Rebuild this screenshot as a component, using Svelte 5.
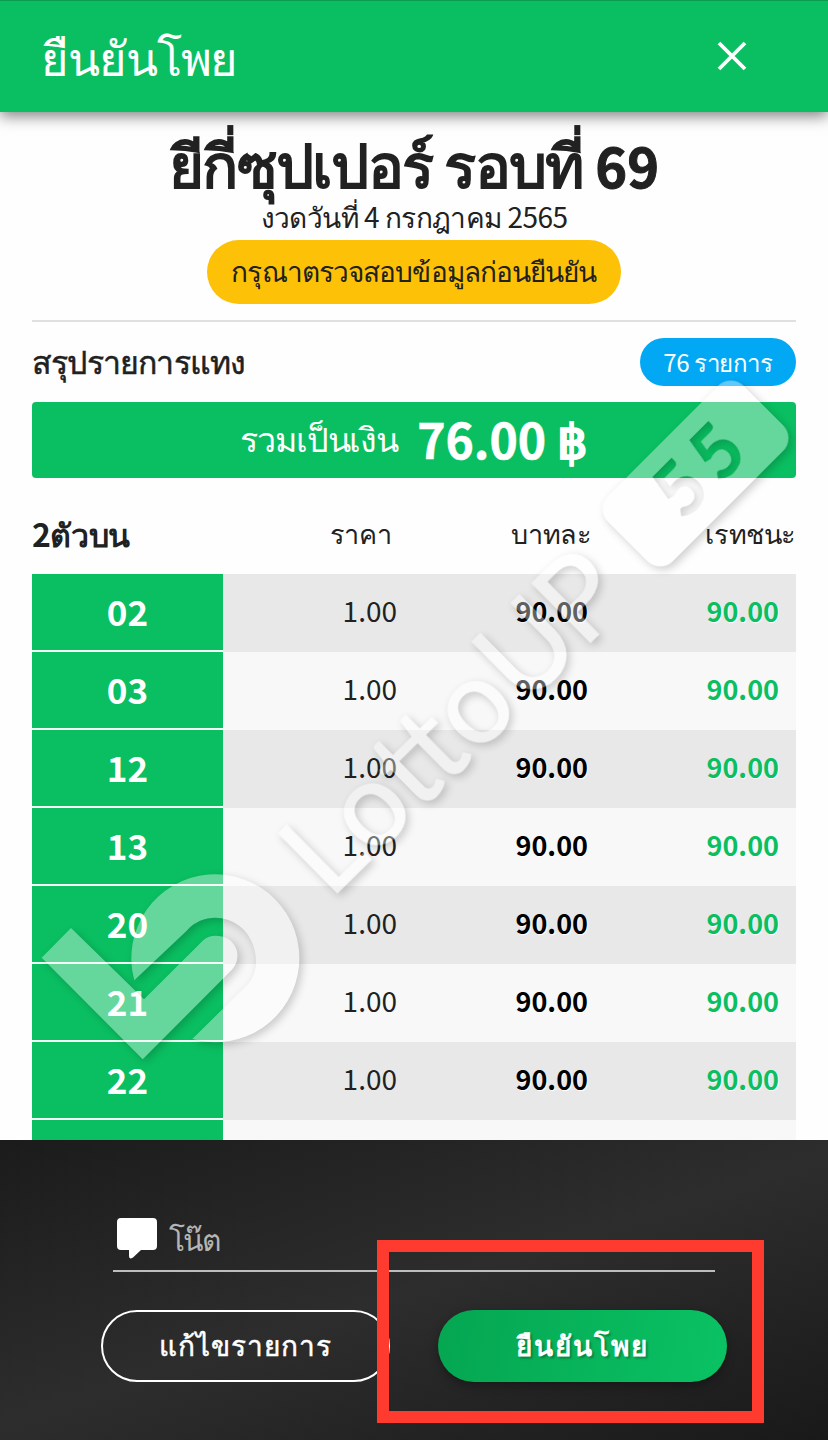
<!-- Confirmation dialog for a lottery slip -->
<script lang="ts">
  const columns = ['ราคา', 'บาทละ', 'เรทชนะ'];

  const rows = ['02', '03', '12', '13', '20', '21', '22'].map((number) => ({
    number,
    price: '1.00',
    rate: '90.00',
    win: '90.00'
  }));

  let note = $state('');
</script>

<div class="dialog">
  <header>
    <h1>ยืนยันโพย</h1>
    <button class="close" aria-label="ปิด">
      <svg width="30" height="30" viewBox="0 0 30 30">
        <path d="M2 2 28 28M28 2 2 28" stroke="#fff" stroke-width="3.8" />
      </svg>
    </button>
  </header>

  <main>
    <section class="intro">
      <h2>ยีกี่ซุปเปอร์ รอบที่ <span class="digits">69</span></h2>
      <p class="date">งวดวันที่ 4 กรกฎาคม 2565</p>
      <span class="notice">กรุณาตรวจสอบข้อมูลก่อนยืนยัน</span>
    </section>

    <section class="summary">
      <span class="summary-title">สรุปรายการแทง</span>
      <span class="count">76 รายการ</span>
    </section>

    <div class="total">
      <span class="total-label">รวมเป็นเงิน</span>
      <strong>76.00 ฿</strong>
    </div>

    <div class="head">
      <h3>2ตัวบน</h3>
      {#each columns as column}
        <span>{column}</span>
      {/each}
    </div>

    <div class="rows">
      {#each rows as row}
        <div class="row">
          <span class="number">{row.number}</span>
          <span class="price">{row.price}</span>
          <span class="rate">{row.rate}</span>
          <span class="win">{row.win}</span>
        </div>
      {/each}
      <!-- top edge of the next row, above the footer -->
      <div class="row"><span class="number"></span></div>
    </div>
  </main>

  <svg class="watermark" viewBox="0 0 828 1440" aria-hidden="true">
    <defs>
      <mask id="badge-cut" maskUnits="userSpaceOnUse" x="-110" y="-60" width="220" height="120">
        <rect x="-110" y="-60" width="220" height="120" fill="#fff" />
        <text class="badge-text" x="-43 9" y="26">55</text>
      </mask>
    </defs>
    <g fill="#fff">
      <path d="M41.7 957.7 71 928 144 999.3 203 940.5C209 935 216 935 222 936.5 237 940 243 958 231.7 970L142.7 1059.3Z" />
      <path d="M134.3 980.3A84 84 0 1 1 192.3 1039L248 984C256 975 258 962 254 948 246 918 208 907 186.7 930.7Z" />
      <text class="brand-text" transform="translate(337 893) rotate(-44.7)" x="-10" y="0" dx="0 4 0 1 1 5 -3">LottoUP</text>
      <g transform="translate(695.5 473.5) rotate(-45)">
        <rect x="-96" y="-46" width="192" height="92" rx="18" mask="url(#badge-cut)" />
      </g>
    </g>
  </svg>

  <footer>
    <label class="note">
      <svg width="40" height="41" viewBox="0 0 40 41">
        <path d="M4 0H36Q40 0 40 4V28Q40 32 36 32H24L16 39.5Q12 42 12 38V32H4Q0 32 0 28V4Q0 0 4 0Z" fill="#fff" />
      </svg>
      <input bind:value={note} placeholder="โน๊ต" />
    </label>
    <div class="actions">
      <button class="edit">แก้ไขรายการ</button>
      <button class="confirm">ยืนยันโพย</button>
    </div>
    <div class="highlight"></div>
  </footer>
</div>

<style>
:global(body) {
  margin: 0;
}
.dialog {
  position: relative;
  display: flex;
  flex-direction: column;
  width: 828px;
  height: 1440px;
  overflow: hidden;
  background: #fefefe;
  color: #212121;
  font-family: "Noto Sans CJK JP", "Noto Sans", sans-serif;
}
.dialog * {
  box-sizing: border-box;
}
h1, h2, h3, p {
  margin: 0;
}
button, input {
  font-family: inherit;
}
header {
  display: flex;
  flex: none;
  align-items: center;
  justify-content: space-between;
  height: 112px;
  padding: 0 81px 2px 41px;
  border-top: 1px solid #0a9c50;
  background: #0abf61;
  box-shadow: 0 4px 14px rgba(0, 0, 0, 0.5);
  color: #fff;
}
h1 {
  font-size: 47px;
  font-weight: 400;
  line-height: 110px;
  letter-spacing: -1.1px;
}
.close {
  display: flex;
  padding: 0;
  border: 0;
  background: none;
}
main {
  flex: 1;
  min-height: 0;
  padding: 0 32px;
  overflow: hidden;
}
.intro {
  display: flex;
  flex-direction: column;
  align-items: center;
  height: 210px;
  border-bottom: 2px solid #e0e0e0;
  white-space: nowrap;
}
h2 {
  height: 88px;
  font-size: 60px;
  font-weight: 700;
  line-height: 100px;
  letter-spacing: -1.7px;
}
.digits {
  font-size: 54px;
  letter-spacing: 0;
  -webkit-text-stroke: 1px;
}
.date {
  height: 40px;
  font-size: 28px;
  line-height: 33px;
  letter-spacing: -0.55px;
}
.notice {
  height: 64px;
  width: 414px;
  border-radius: 32px;
  background: #fdc107;
  font-size: 28px;
  line-height: 60px;
  letter-spacing: -0.9px;
  text-align: center;
}
.summary {
  display: flex;
  align-items: center;
  justify-content: space-between;
  height: 80px;
}
.summary-title {
  font-size: 32px;
  font-weight: 500;
  letter-spacing: -0.8px;
  -webkit-text-stroke: 0.5px;
}
.count {
  width: 156px;
  height: 48px;
  border-radius: 24px;
  background: #03a8f5;
  color: #fff;
  font-size: 24px;
  line-height: 48px;
  letter-spacing: -0.4px;
  text-align: center;
}
.total {
  display: flex;
  align-items: center;
  justify-content: center;
  gap: 19px;
  height: 76px;
  border-radius: 4px;
  background: #0abf61;
  color: #fff;
}
.total-label {
  font-size: 34px;
  letter-spacing: -1.1px;
}
.total strong {
  padding-bottom: 4px;
  font-size: 48px;
  -webkit-text-stroke: 0.6px;
}
.head {
  display: grid;
  grid-template-columns: 191px 191px 191px 191px;
  align-items: center;
  height: 96px;
  padding-top: 16px;
  font-size: 27px;
  letter-spacing: -0.4px;
}
h3 {
  padding-top: 2px;
  font-size: 32px;
}
.head span {
  text-align: center;
}
.head span:nth-child(2),
.head span:nth-child(3) {
  padding-left: 84px;
}
.head span:last-child {
  text-align: right;
}
.row {
  display: grid;
  grid-template-columns: 191px 191px 191px 191px;
  height: 78px;
  background: #e8e8e8;
  font-size: 28px;
  line-height: 73px;
  text-align: right;
}
.row:nth-child(even) {
  background: #f8f8f8;
}
.row span {
  padding-right: 17px;
}
.row .number {
  height: 78px;
  padding: 0;
  border-bottom: 2px solid #f4fbf6;
  background: #0abf61;
  color: #fff;
  font-size: 35px;
  font-weight: 700;
  line-height: 74px;
  text-align: center;
}
.rate, .win {
  font-size: 27px;
  font-weight: 700;
  text-shadow: 1px 1px 1px #fff;
}
.rate {
  color: #000;
}
.win {
  color: #0abf61;
}
.watermark {
  position: absolute;
  top: 0;
  left: 0;
  width: 828px;
  height: 1440px;
  opacity: 0.38;
  pointer-events: none;
}
.watermark > g {
  filter: drop-shadow(3px 3px 4px rgba(0, 0, 0, 0.5));
}
.brand-text {
  font-family: Lato, sans-serif;
  font-size: 116px;
  stroke: #fff;
  stroke-width: 1.6px;
}
.badge-text {
  fill: #000;
  font-family: Lato, sans-serif;
  font-size: 74px;
  font-weight: 900;
}
footer {
  position: relative;
  flex: none;
  height: 300px;
  padding: 70px 101px 0;
  background: linear-gradient(162deg, #1b1b1b, #2d2d2d 50%, #191919);
}
.note {
  display: flex;
  align-items: center;
  width: 602px;
  height: 62px;
  margin-left: 12px;
  padding: 0 4px 4px;
  border-bottom: 2px solid #bdbdbd;
}
.note input {
  flex: 1;
  height: 56px;
  padding: 0 0 0 12px;
  border: 0;
  outline: 0;
  background: none;
  color: #fff;
  font-size: 30px;
  letter-spacing: -1.8px;
}
.note input::placeholder {
  color: #b5b5b5;
}
.actions {
  display: flex;
  justify-content: space-between;
  margin-top: 38px;
}
.actions button {
  width: 289px;
  height: 72px;
  padding: 0;
  border: 0;
  border-radius: 36px;
  color: #fff;
  font-size: 28px;
  letter-spacing: 2px;
}
.actions .edit {
  border: 2px solid #fff;
  background: none;
  letter-spacing: 1.1px;
  -webkit-text-stroke: 0.5px;
}
.actions .confirm {
  background: linear-gradient(100deg, #05a651, #0ac264);
  box-shadow: 0 4px 10px rgba(0, 0, 0, 0.3);
  font-weight: 700;
  text-shadow: 2px 2px 2px rgba(0, 0, 0, 0.25);
}
/* frame that draws the eye to the confirm button */
.highlight {
  position: absolute;
  top: 100px;
  left: 377px;
  width: 387px;
  height: 183px;
  border: 12px solid #ff3b2f;
  pointer-events: none;
}
</style>
